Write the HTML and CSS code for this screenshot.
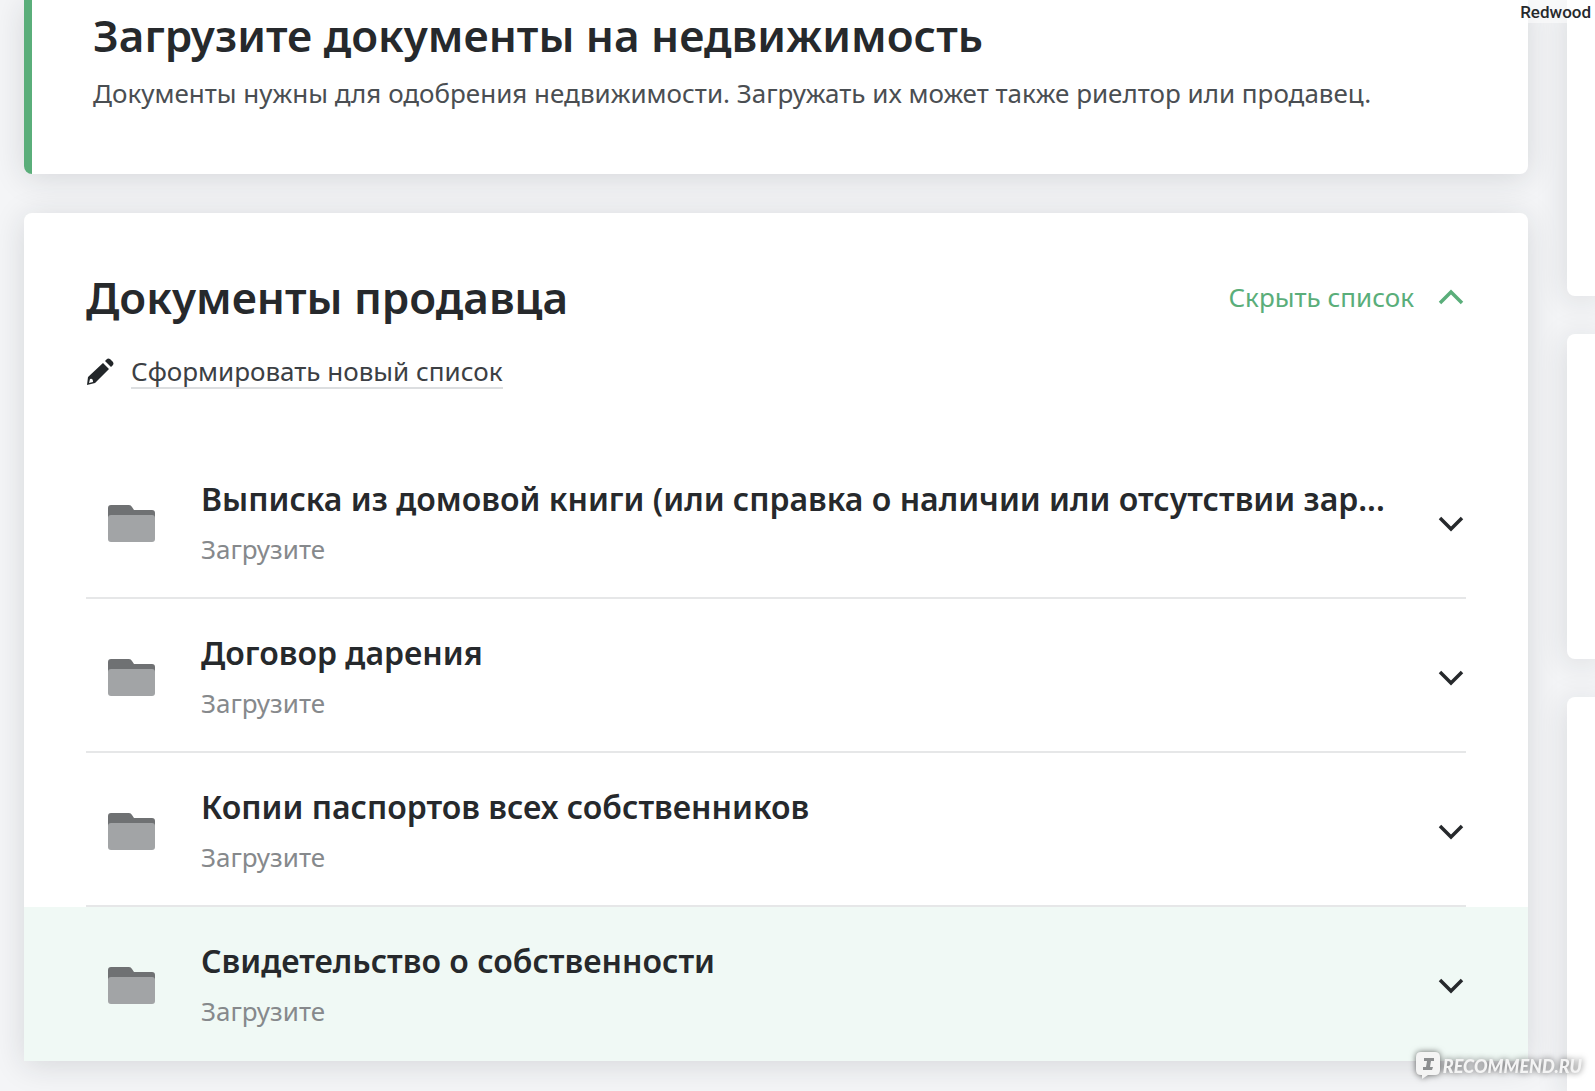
FILE: index.html
```html
<!DOCTYPE html>
<html lang="ru">
<head>
<meta charset="utf-8">
<meta name="viewport" content="width=device-width, initial-scale=1">
<title>Документы на недвижимость</title>
<link rel="stylesheet" href="styles.css">
</head>
<body>
<svg class="sprite" aria-hidden="true">
  <symbol id="folder" viewBox="0 0 48 38">
    <path fill="#6f7173" d="M3 0h18q2 0 3 2l2 3h18q3 0 3 3v12H0V3q0-3 3-3z"/>
    <path fill="#a2a4a6" d="M0 13q0-3 3-3h41q3 0 3 3v21q0 3-3 3H3q-3 0-3-3z"/>
  </symbol>
  <symbol id="chevron" viewBox="0 0 26 16">
    <path fill="none" stroke="currentColor" stroke-width="3.5" d="M2 2l11 11L24 2"/>
  </symbol>
</svg>
<div class="page">
  <main class="content">
    <section class="card intro">
      <h1 class="heading">Загрузите документы на недвижимость</h1>
      <p class="intro-text">Документы нужны для одобрения недвижимости. Загружать их может также риелтор или продавец.</p>
    </section>
    <section class="card documents">
      <header class="documents-head">
        <h2 class="heading">Документы продавца</h2>
        <button class="toggle" type="button">Скрыть список
          <svg class="chevron chevron-up" aria-hidden="true"><use href="#chevron"/></svg>
        </button>
      </header>
      <div class="new-list">
        <svg class="pencil" viewBox="0 0 28 28" aria-hidden="true">
          <path fill="#222629" fill-rule="evenodd" d="M1 27l1-8L17 5l6 6L9 25zM3 25l4-1q0-4-3-3z"/>
          <path fill="#222629" d="M19 3l2-2q1-1 3 0l3 3q1 2 0 3l-2 2z"/>
        </svg>
        <a class="new-list-link" href="#">Сформировать новый список</a>
      </div>
      <ul class="list">
        <li><button class="row" type="button">
          <svg class="folder" aria-hidden="true"><use href="#folder"/></svg>
          <span class="row-text"><span class="row-title">Выписка из домовой книги (или справка о наличии или отсутствии зар...</span><span class="row-note">Загрузите</span></span>
          <svg class="chevron" aria-hidden="true"><use href="#chevron"/></svg>
        </button></li>
        <li><button class="row" type="button">
          <svg class="folder" aria-hidden="true"><use href="#folder"/></svg>
          <span class="row-text"><span class="row-title">Договор дарения</span><span class="row-note">Загрузите</span></span>
          <svg class="chevron" aria-hidden="true"><use href="#chevron"/></svg>
        </button></li>
        <li><button class="row" type="button">
          <svg class="folder" aria-hidden="true"><use href="#folder"/></svg>
          <span class="row-text"><span class="row-title">Копии паспортов всех собственников</span><span class="row-note">Загрузите</span></span>
          <svg class="chevron" aria-hidden="true"><use href="#chevron"/></svg>
        </button></li>
        <li class="active"><button class="row" type="button">
          <svg class="folder" aria-hidden="true"><use href="#folder"/></svg>
          <span class="row-text"><span class="row-title">Свидетельство о собственности</span><span class="row-note">Загрузите</span></span>
          <svg class="chevron" aria-hidden="true"><use href="#chevron"/></svg>
        </button></li>
      </ul>
    </section>
  </main>
  <aside class="side">
    <div class="card side-first"></div>
    <div class="card side-second"></div>
    <div class="card side-last"></div>
  </aside>
  <div class="user">Redwood</div>
  <div class="watermark">
    <svg class="watermark-bubble" viewBox="0 0 24 28" aria-hidden="true">
      <path fill="#f4f4f4" d="M5 0h14q5 0 5 5v13q0 5-5 5h-7l-6 4v-4H5q-5 0-5-5V5q0-5 5-5z"/>
      <path fill="#8c8e90" d="M8 6h10v3h-3l-1 6h3l-1 3H7v-3h3l1-6H8z"/>
    </svg>
    <span>RECOMMEND.RU</span>
  </div>
</div>
</body>
</html>
```
FILE: styles.css
```css
* { box-sizing: border-box; }

body {
  margin: 0;
  background: #f4f5f7;
  color: #26292c;
  font-family: "Noto Sans", "Open Sans", sans-serif;
}

h1, h2, p, ul { margin: 0; padding: 0; }
ul { list-style: none; }

button {
  border: 0;
  background: none;
  color: inherit;
  font: inherit;
  text-align: left;
  cursor: pointer;
}

.sprite { position: absolute; width: 0; height: 0; }

.page {
  position: relative;
  display: grid;
  grid-template-columns: minmax(0, 1fr) 28px;
  gap: 39px;
  min-height: 100vh;
  padding-left: 24px;
  overflow: hidden;
}

.content {
  display: flex;
  flex-direction: column;
  gap: 39px;
  padding-bottom: 28px;
}

.card {
  border-radius: 8px;
  background: #fff;
  box-shadow: 0 4px 32px rgba(30, 38, 42, 0.14);
}

.heading {
  font-size: 44px;
  font-weight: 600;
  line-height: 60px;
  white-space: nowrap;
}

.intro {
  padding: 5px 60px 61px 61px;
  border-left: 8px solid #5aae7a;
  border-radius: 0 0 8px 8px;
}

.intro-text {
  padding-top: 8px;
  color: #4a4e52;
  font-size: 26px;
  line-height: 40px;
  white-space: nowrap;
}

.documents {
  padding-top: 54px;
  border-radius: 8px 8px 0 0;
}

.documents-head {
  display: flex;
  align-items: center;
  justify-content: space-between;
  padding: 0 64px 0 62px;
}

.toggle {
  display: flex;
  align-items: center;
  gap: 24px;
  padding: 0;
  color: #5aae7a;
  font-size: 26px;
  line-height: 40px;
}

.chevron {
  flex: none;
  width: 26px;
  height: 16px;
}

.chevron-up { transform: rotate(180deg); }

.new-list {
  display: flex;
  align-items: center;
  gap: 17px;
  padding: 28px 62px 56px;
}

.pencil { width: 28px; height: 28px; }

.new-list-link {
  border-bottom: 2px solid #dcdee0;
  color: #3c4044;
  font-size: 26px;
  line-height: 32px;
  text-decoration: none;
}

.list li { padding: 0 62px; }
.list .active { background: #f0f9f5; }

.row {
  display: flex;
  align-items: center;
  gap: 45px;
  width: 100%;
  height: 154px;
  padding: 8px 2px 2px 22px;
  border-bottom: 2px solid #e6e7e8;
}

.active .row { border-bottom-color: transparent; }

.folder { flex: none; width: 48px; height: 38px; }

.row-text {
  display: flex;
  flex: 1;
  flex-direction: column;
  gap: 6px;
  min-width: 0;
  padding-bottom: 4px;
}

.row-title {
  font-size: 32px;
  font-weight: 600;
  line-height: 48px;
  white-space: nowrap;
}

.row-note {
  color: #86898c;
  font-size: 26px;
  line-height: 40px;
}

.side {
  display: flex;
  flex-direction: column;
  gap: 38px;
}

.side .card { border-radius: 8px 0 0 8px; }
.side .side-first { height: 296px; border-top-left-radius: 0; }
.side .side-second { height: 325px; }
.side .side-last { flex: 1; border-bottom-left-radius: 0; }

.user {
  position: absolute;
  top: 0;
  right: 0;
  padding: 1px 4px 0 0;
  background: rgba(255, 255, 255, 0.5);
  font-family: Roboto, sans-serif;
  font-size: 17px;
  font-weight: 500;
  line-height: 22px;
}

.watermark {
  position: absolute;
  right: 13px;
  bottom: 11px;
  display: flex;
  align-items: center;
  gap: 3px;
  color: #f4f4f4;
  filter: drop-shadow(0 0 3px rgba(0, 0, 0, 0.6));
  font-family: Lato, sans-serif;
  font-size: 18px;
  font-style: italic;
  font-weight: 900;
  line-height: 28px;
}

.watermark-bubble { width: 24px; height: 28px; }
```
